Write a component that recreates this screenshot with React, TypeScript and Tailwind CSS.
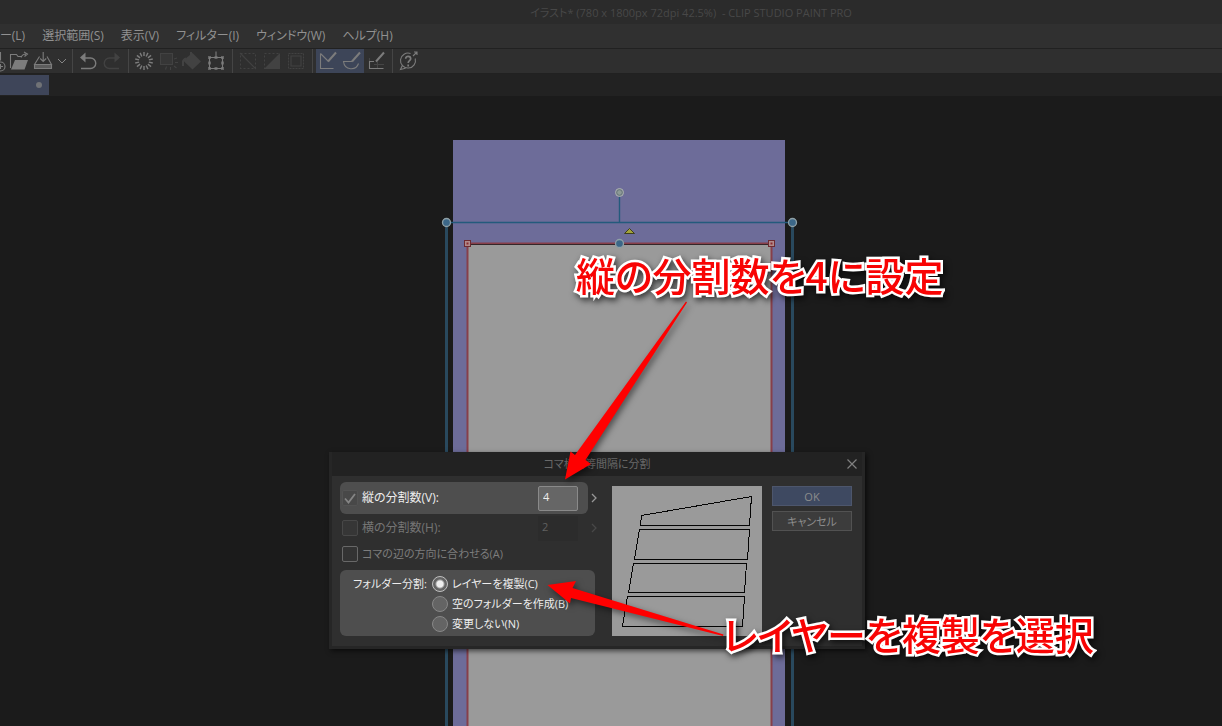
import type { ReactNode } from "react";

const uiFont =
  "font-['Open_Sans','Noto_Sans_CJK_JP',sans-serif] [font-feature-settings:'palt']";

const menus = [
  "ー(L)",
  "選択範囲(S)",
  "表示(V)",
  "フィルター(I)",
  "ウィンドウ(W)",
  "ヘルプ(H)",
];

function Tool({
  label,
  dim,
  active,
  children,
}: {
  label: string;
  dim?: boolean;
  active?: boolean;
  children: ReactNode;
}) {
  const tone = dim ? "text-[#424242]" : "text-[#7c7c7c]";
  const fill = active ? "bg-[#3d4558]" : "";
  return (
    <button
      type="button"
      aria-label={label}
      className={`grid size-6 shrink-0 place-items-center ${tone} ${fill}`}
    >
      <svg
        viewBox="0 0 24 24"
        className="size-6"
        fill="none"
        stroke="currentColor"
        strokeWidth="1.1"
      >
        {children}
      </svg>
    </button>
  );
}

function Separator() {
  return <span className="mr-[3px] ml-1 h-6 w-px shrink-0 bg-[#454545]" />;
}

const spokes = Array.from({ length: 14 }, (_, i) => (i * 360) / 14);

function Toolbar() {
  return (
    <div className="-ml-4 flex h-6 items-center">
      <Tool label="新規">
        <path d="M4 3.500h12.500v8" />
        <circle cx="16.500" cy="17.500" r="4.500" />
        <path d="M16.500 15v5M14 17.500h5" />
      </Tool>
      <Tool label="開く">
        <path d="M2.500 19V5.500h6l1.500 2h4" />
        <path d="M13 8.500c1-2.500 2.500-3.500 5-3.500M16 3l3.500 2L16.500 7.500" />
        <path d="M3 20.500L7 11h13l-3.500 9.500z" fill="currentColor" stroke="none" />
      </Tool>
      <Tool label="保存">
        <path d="M7.500 7.500L2.500 15.500h17L15 7.500M2.500 15.500v4h17v-4" />
        <path d="M2.500 16h17v3.500h-17z" fill="currentColor" stroke="none" opacity="0.6" />
        <path d="M11.200 3v9M8.200 9.500l3 3 3-3" />
      </Tool>
      <button
        type="button"
        aria-label="保存オプション"
        className="grid h-6 w-3 shrink-0 place-items-center text-[#858585]"
      >
        <svg viewBox="0 0 10 6" className="h-1.5 w-2.5" fill="none" stroke="currentColor">
          <path d="M1 1l4 4 4-4" />
        </svg>
      </button>
      <Separator />
      <Tool label="取り消し">
        <path d="M5 19.500h9.500a5 5 0 0 0 0-10.500H8" strokeWidth="1.400" />
        <path d="M9.500 3.500v10L4 8.500z" fill="currentColor" stroke="none" />
      </Tool>
      <Tool label="やり直し" dim>
        <path d="M19 19.500H9.500A5 5 0 0 1 9.500 9H16" strokeWidth="1.400" />
        <path d="M14.500 3.500v10L20 8.500z" fill="currentColor" stroke="none" />
      </Tool>
      <Separator />
      <Tool label="消去">
        {spokes.map((angle) => (
          <path
            key={angle}
            d="M12 3v4"
            strokeWidth="1.400"
            transform={`rotate(${angle} 12 12)`}
          />
        ))}
      </Tool>
      <Tool label="選択範囲外を消去" dim>
        <path d="M4.500 4.500h12v11h-12z" fill="#363636" />
        <path d="M18 10l3-1M19 13.500h3M18 17l2.500 2M14.500 18v3M10.500 17.500l-1 3" />
      </Tool>
      <Tool label="塗りつぶし" dim>
        <path
          d="M3 11.500L12.500 4l8.500 8.500-8.500 8z"
          fill="currentColor"
          stroke="none"
        />
        <path d="M3 11.500V17M11 3v6M6 9.500C3.500 10 3 11 3 14" strokeWidth="2" />
      </Tool>
      <Tool label="拡大・縮小・回転">
        <path d="M5.500 8.500h13v11h-13zM12 2.500v6" />
        <path
          d="M4 7h3v3H4zM17 7h3v3h-3zM4 18h3v3H4zM17 18h3v3h-3zM10.500 7h3v3h-3zM10.500 18h3v3h-3zM4 12.500h3v3H4zM17 12.500h3v3h-3z"
          fill="currentColor"
          stroke="none"
          opacity="0.7"
        />
      </Tool>
      <Separator />
      <Tool label="選択を解除" dim>
        <path d="M4.500 4.500h15v15h-15z" strokeDasharray="2 2" />
        <path d="M4 4l16 16" />
      </Tool>
      <Tool label="選択範囲を反転" dim>
        <path d="M4.500 4.500h15v15h-15z" strokeDasharray="2 2" />
        <path d="M20 4v16H4z" fill="currentColor" stroke="none" />
      </Tool>
      <Tool label="選択範囲の境界線" dim>
        <path d="M4.500 4.500h15v15h-15z" strokeDasharray="2 1" />
        <path d="M7 7h10v10H7z" />
      </Tool>
      <Separator />
      <Tool label="定規にスナップ" active>
        <path d="M4.500 4.500v15h13M4.500 4.500l8 8" />
        <path d="M20 3.500l-8 9" strokeWidth="2" />
      </Tool>
      <Tool label="特殊定規にスナップ" active>
        <path d="M12 12.500H3.500c1 9 12.500 9.500 15 2" />
        <path d="M20 3.500l-8 9" strokeWidth="2" />
      </Tool>
      <Tool label="グリッドにスナップ">
        <path d="M10 12.500H5.500v7h14" />
        <path d="M5.500 9v3M13.500 13v6M10 15.500h10" opacity="0.3" />
        <path d="M20 3.500l-8 9" strokeWidth="2" />
      </Tool>
      <Separator />
      <Tool label="サポート">
        <path d="M19.200 9.500a7.500 7.500 0 1 1-4.700-5M6.200 16.800l-1.700 3.700 5-1.200" />
        <path d="M17 7l4-4M18 3h3v3" />
        <path d="M9.700 9.800c0-3.400 5-3.200 5 0 0 1.900-2.500 1.900-2.500 4.200M12.200 15.500v2" strokeWidth="1.700" />
      </Tool>
    </div>
  );
}

function Artwork() {
  return (
    <svg className="absolute inset-0 h-full w-full" aria-hidden="true">
      <g transform="translate(0 -96)">
        <rect x="453" y="140" width="332" height="700" fill="#6d6c99" />
        <rect x="467" y="244" width="305" height="600" fill="#9a9a9a" />
        <path d="M467.500 840V243.500h304V840" fill="none" stroke="#873f4a" strokeWidth="2" />
        <path d="M468 244.500h303" stroke="#35262a" />
        <path d="M446.500 222V840M792.500 222V840" stroke="#29495e" strokeWidth="3" />
        <path d="M446 222.500h347M619.500 192v30" stroke="#235a7c" strokeWidth="1.400" />
        <path d="M624.500 233.500l5-5 5 5z" fill="#a3a33a" stroke="#3f3f1c" />
        {[467.5, 771.5].map((x) => (
          <g key={x}>
            <rect x={x - 3} y="240.500" width="6" height="6" fill="#b08a8a" stroke="#6d2a30" />
            <rect x={x - 1} y="242.500" width="2" height="2" fill="#8a2a2e" />
          </g>
        ))}
        <circle cx="619.500" cy="192.500" r="4" fill="#8d9a96" stroke="#a9adb0" />
        <circle cx="619.500" cy="192.500" r="2.800" fill="none" stroke="#66727a" />
        {[
          [446.5, 222.5],
          [792.5, 222.5],
          [619.5, 243.5],
        ].map(([x, y]) => (
          <circle key={x} cx={x} cy={y} r="4" fill="#3c6788" stroke="#8fa0a6" strokeWidth="1.300" />
        ))}
      </g>
    </svg>
  );
}

function Check({
  id,
  checked,
  dim,
}: {
  id: string;
  checked?: boolean;
  dim?: boolean;
}) {
  const tone = checked
    ? "border-[#535353] bg-[#484848]"
    : dim
      ? "border-[#484848] bg-[#363636]"
      : "border-[#686868] bg-[#333333]";
  return (
    <span className="grid size-4 shrink-0">
      <input
        id={id}
        type="checkbox"
        defaultChecked={checked}
        disabled={dim}
        className={`col-start-1 row-start-1 size-4 appearance-none rounded-xs border ${tone}`}
      />
      {checked && (
        <svg
          viewBox="0 0 16 16"
          className="pointer-events-none col-start-1 row-start-1 size-4"
          fill="none"
          stroke="#858585"
          strokeWidth="1.800"
        >
          <path d="M3 8.500l3.500 4L13 4" />
        </svg>
      )}
    </span>
  );
}

function Stepper({ dim }: { dim?: boolean }) {
  const tone = dim ? "text-[#484848]" : "text-[#979797]";
  return (
    <button
      type="button"
      aria-label="値を調整"
      disabled={dim}
      className={`grid h-6 w-3 shrink-0 place-items-center ${tone}`}
    >
      <svg viewBox="0 0 6 10" className="h-2.5 w-1.5" fill="none" stroke="currentColor" strokeWidth="1.300">
        <path d="M1 1l4 4-4 4" />
      </svg>
    </button>
  );
}

const folderOptions = ["レイヤーを複製(C)", "空のフォルダーを作成(B)", "変更しない(N)"];

function DivideDialog() {
  return (
    <section
      role="dialog"
      aria-labelledby="dialog-title"
      className="absolute top-[356px] left-[329px] border-x-3 border-b-3 border-[#262626] bg-[#2f2f2f] text-[11px] text-[#8c8c8c] shadow-[2px_2px_5px_rgba(0,0,0,0.6)]"
    >
      <header className="flex h-6 items-center bg-[#222222]">
        <h1 id="dialog-title" className="flex-1 pl-5 text-center text-[#696969]">
          コマ枠を等間隔に分割
        </h1>
        <button type="button" aria-label="閉じる" className="grid size-5 place-items-center text-[#808080]">
          <svg viewBox="0 0 10 10" className="size-2.5" fill="none" stroke="currentColor" strokeWidth="1.200">
            <path d="M0.500 0.500l9 9M9.500 0.500l-9 9" />
          </svg>
        </button>
      </header>

      <div className="flex gap-2 pt-1.5 pr-2.5 pb-2.5 pl-2">
        <form className="w-[264px]">
          <div className="flex h-8 items-center text-xs">
            <div className="flex h-8 w-[248px] items-center gap-1 rounded-md bg-[#4e4e4e] pr-2.5 pl-0.5 text-[#ededed]">
              <Check id="rows-on" checked />
              <label htmlFor="rows-on" className="flex-1">
                縦の分割数(V):
              </label>
              <input
                aria-label="縦の分割数"
                defaultValue="4"
                className="h-[25px] w-10 rounded-xs border border-[#8a8a8a] bg-[#666666] px-1 pb-1 text-[11px]"
              />
            </div>
            <Stepper />
          </div>
          <div className="flex h-7 items-center text-xs">
            <div className="flex w-[248px] items-center gap-1 pr-2.5 pl-0.5 text-[#757575]">
              <Check id="cols-on" dim />
              <label htmlFor="cols-on" className="flex-1">
                横の分割数(H):
              </label>
              <input
                aria-label="横の分割数"
                defaultValue="2"
                disabled
                className="h-[25px] w-10 bg-[#2c2c2c] px-1 pb-1 text-[11px] text-[#606060]"
              />
            </div>
            <Stepper dim />
          </div>
          <div className="flex h-6 items-center gap-1 pl-0.5">
            <Check id="align" />
            <label htmlFor="align" className="text-[#7d7d7d]">
              コマの辺の方向に合わせる(A)
            </label>
          </div>
          <fieldset className="mt-1 w-[255px] rounded-md bg-[#4e4e4e] pt-1 pb-0.5 text-[#ededed]">
            <div className="flex">
              <span id="folder-label" className="h-5 w-[87px] text-right leading-5">
                フォルダー分割:
              </span>
              <div role="radiogroup" aria-labelledby="folder-label" className="pl-[5px]">
                {folderOptions.map((name, i) => (
                  <label key={name} className="flex h-5 items-center gap-1">
                    <input
                      type="radio"
                      name="folder"
                      defaultChecked={i === 0}
                      className="size-4 appearance-none rounded-full border border-[#888888] bg-[#646464] checked:border-[#c0c0c0] checked:bg-[radial-gradient(circle,#eeeeee_0_3px,#646464_5px)]"
                    />
                    {name}
                  </label>
                ))}
              </div>
            </div>
          </fieldset>
        </form>

        <svg
          viewBox="0 0 150 150"
          className="mt-1 size-[150px] bg-[#9a9a9a]"
          fill="none"
          stroke="#050505"
          shapeRendering="crispEdges"
          role="img"
          aria-label="分割プレビュー"
        >
          <path d="M29.500 29.500L139.500 10.500 137.500 39.500H28.500z" />
          <path d="M27.500 43.500H137.500L135.500 73.500H22.500z" />
          <path d="M21.500 77.500H134.500L132.500 106.500H16.500z" />
          <path d="M15.500 110.500H132.500L130.500 140.500H10.500z" />
        </svg>

        <div className="mt-1 ml-0.5 flex w-20 flex-col gap-[5px]">
          <button type="button" className="h-5 border border-[#4d566c] bg-[#3e4961] leading-none">
            OK
          </button>
          <button type="button" className="h-5 border border-[#525252] bg-[#3c3c3c] leading-none">
            キャンセル
          </button>
        </div>
      </div>
    </section>
  );
}

const noteStyle =
  "pointer-events-none absolute whitespace-nowrap font-['Noto_Sans_CJK_JP',sans-serif] text-[39px] leading-none font-medium text-[#f80404] [-webkit-text-stroke:5px_white] [paint-order:stroke_fill] [filter:drop-shadow(2px_3px_3px_rgba(0,0,0,0.65))]";

export default function App() {
  return (
    <div className={`flex h-screen flex-col overflow-hidden bg-[#1b1b1b] ${uiFont}`}>
      <header className="flex h-6 shrink-0 items-center justify-center bg-[#2b2b2b] pt-0.5 pl-40 text-[11px] text-[#484848]">
        イラスト* (780 x 1800px 72dpi 42.5%)&nbsp; - CLIP STUDIO PAINT PRO
      </header>
      <nav className="flex h-6 shrink-0 items-center gap-[17px] bg-[#303030] text-xs text-[#919191]">
        {menus.map((name) => (
          <button key={name} type="button" className="shrink-0">
            {name}
          </button>
        ))}
      </nav>
      <div className="shrink-0 border-y border-[#212121] bg-[#2f2f2f]">
        <Toolbar />
      </div>
      <div className="h-[22px] shrink-0 bg-[#222222] pt-px">
        <div className="flex h-5 w-[49px] items-center justify-end bg-[#3e4559] pr-[7px]">
          <span className="size-1.5 rounded-full bg-[#707276]" />
        </div>
      </div>

      <main className="relative min-h-0 flex-1 overflow-hidden">
        <Artwork />
        <DivideDialog />
        <svg className="pointer-events-none absolute inset-0 h-full w-full [filter:drop-shadow(2px_3px_3px_rgba(0,0,0,0.5))]" aria-hidden="true">
          <g transform="translate(0 -96)" fill="#ff0000">
            <path d="M686 301.500L687 302.500 585.500 460 591 464 565 479.500 570.500 451.500 575 455z" />
            <path d="M723.500 634.500L723 636 571 598 570 603.500 547.500 585 576 581 572.500 588z" />
          </g>
        </svg>
        <p className={`${noteStyle} top-[159px] left-[576px]`}>縦の分割数を4に設定</p>
        <p className={`${noteStyle} top-[518px] left-[723px]`}>レイヤーを複製を選択</p>
      </main>
    </div>
  );
}
